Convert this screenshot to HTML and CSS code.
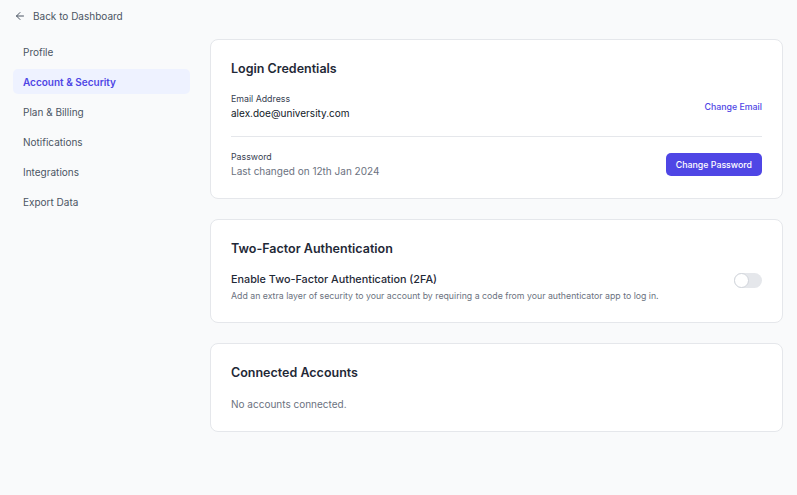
FILE: index.html
```html
<!DOCTYPE html>
<html lang="en">
<head>
<meta charset="utf-8">
<title>Account &amp; Security</title>
<link rel="stylesheet" href="styles.css">
</head>
<body>
<div class="page">
  <a class="back" href="#">
    <svg class="back-icon" viewBox="0 0 24 24" width="12" height="12" fill="none" stroke="currentColor" stroke-width="2" stroke-linecap="round" stroke-linejoin="round"><path d="M19 12H5"/><path d="M12 19l-7-7 7-7"/></svg>
    <span>Back to Dashboard</span>
  </a>
  <div class="layout">
    <nav class="sidebar">
      <a class="nav-item" href="#">Profile</a>
      <a class="nav-item active" href="#">Account &amp; Security</a>
      <a class="nav-item" href="#">Plan &amp; Billing</a>
      <a class="nav-item" href="#">Notifications</a>
      <a class="nav-item" href="#">Integrations</a>
      <a class="nav-item" href="#">Export Data</a>
    </nav>
    <main class="main">
      <section class="card">
        <h2 class="card-title">Login Credentials</h2>
        <div class="row">
          <div>
            <div class="label">Email Address</div>
            <div class="value">alex.doe@university.com</div>
          </div>
          <a class="link" href="#">Change Email</a>
        </div>
        <div class="divider"></div>
        <div class="row">
          <div>
            <div class="label">Password</div>
            <div class="value muted">Last changed on 12th Jan 2024</div>
          </div>
          <button class="btn">Change Password</button>
        </div>
      </section>
      <section class="card">
        <h2 class="card-title">Two-Factor Authentication</h2>
        <div class="row">
          <div>
            <div class="label strong">Enable Two-Factor Authentication (2FA)</div>
            <div class="desc">Add an extra layer of security to your account by requiring a code from your authenticator app to log in.</div>
          </div>
          <span class="toggle"><span class="knob"></span></span>
        </div>
      </section>
      <section class="card">
        <h2 class="card-title">Connected Accounts</h2>
        <p class="empty">No accounts connected.</p>
      </section>
    </main>
  </div>
</div>
</body>
</html>
```

FILE: styles.css
```css
* { box-sizing: border-box; }
html, body { margin: 0; padding: 0; }
body {
  background: #f9fafb;
  font-family: Inter, "Liberation Sans", sans-serif;
  color: #111827;
  -webkit-font-smoothing: antialiased;
}
.page { padding: 8px 14px 0 13px; }
.back {
  display: flex;
  align-items: center;
  gap: 7px;
  height: 15px;
  padding-left: 1px;
  color: #4b5563;
  font-size: 10px;
  text-decoration: none;
}
.back-icon { color: #4b5563; }
.layout {
  display: flex;
  gap: 20px;
  margin-top: 16px;
}
.sidebar {
  width: 177px;
  flex-shrink: 0;
  display: flex;
  flex-direction: column;
  gap: 5px;
}
.nav-item {
  display: flex;
  align-items: center;
  height: 25px;
  padding-left: 10px;
  border-radius: 5px;
  font-size: 10px;
  color: #4b5563;
  text-decoration: none;
}
.nav-item.active {
  background: #eef2ff;
  color: #4f46e5;
  font-weight: 600;
}
.main {
  flex: 1;
  display: flex;
  flex-direction: column;
  gap: 20px;
}
.card {
  background: #fff;
  border: 1px solid #e5e7eb;
  border-radius: 8px;
  padding: 20px 20px 19px;
}
.card-title {
  margin: 0 0 14px;
  font-size: 12.5px;
  line-height: 18px;
  font-weight: 600;
  color: #1f2937;
}
.row {
  display: flex;
  align-items: center;
  justify-content: space-between;
}
.label {
  font-size: 8.8px;
  line-height: 14px;
  color: #374151;
}
.label.strong {
  font-size: 10.8px;
  line-height: 16px;
  font-weight: 500;
  color: #1f2937;
}
.value {
  font-size: 10px;
  line-height: 15px;
  color: #111827;
}
.value.muted { color: #6b7280; }
.link {
  font-size: 8.8px;
  font-weight: 500;
  color: #4f46e5;
  text-decoration: none;
}
.divider {
  height: 1px;
  background: #e5e7eb;
  margin: 15px 0 13px;
}
.btn {
  height: 23px;
  padding: 0 10px;
  border: none;
  border-radius: 5px;
  background: #4f46e5;
  color: #fff;
  font-family: inherit;
  font-size: 8.8px;
  font-weight: 500;
}
.desc {
  margin-top: 1px;
  font-size: 8.75px;
  line-height: 14px;
  color: #6b7280;
}
.toggle {
  position: relative;
  width: 28px;
  height: 15px;
  border-radius: 8px;
  background: #e5e7eb;
  margin-top: -15px;
  flex-shrink: 0;
}
.knob {
  position: absolute;
  left: 0;
  top: 0;
  width: 15px;
  height: 15px;
  border-radius: 50%;
  background: #fff;
  border: 1px solid #d1d5db;
}
.empty {
  margin: 0;
  font-size: 10px;
  line-height: 16px;
  color: #6b7280;
}
```
